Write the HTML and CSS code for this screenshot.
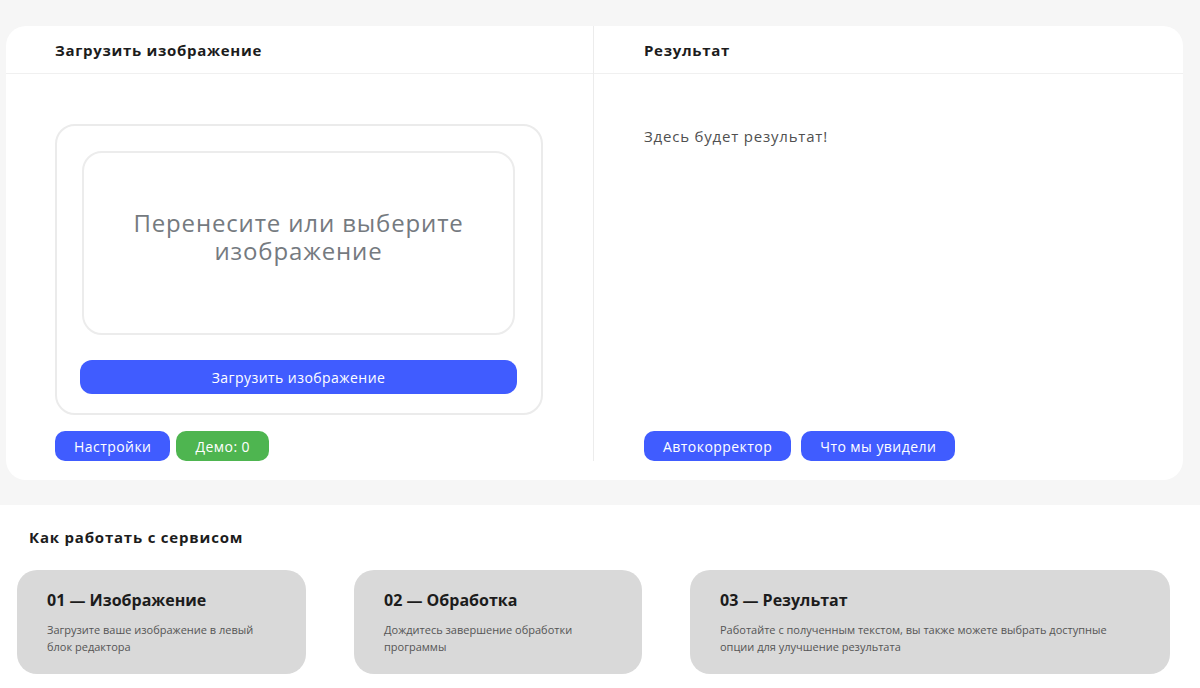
FILE: index.html
```html
<!DOCTYPE html>
<html lang="ru">

<head>
    <meta charset="UTF-8">
    <meta name="viewport" content="width=device-width, initial-scale=1.0">
    <title>Распознавание текста</title>
    <link rel="stylesheet" href="styles.css">
</head>

<body>
    <section class="top">
        <div class="editor">
            <!-- Левая колонка: загрузка -->
            <div class="col col-left">
                <div class="col-head">Загрузить изображение</div>
                <div class="col-body">
                    <div class="upload-box">
                        <div class="dropzone">Перенесите или выберите изображение</div>
                        <button class="btn btn-wide">Загрузить изображение</button>
                    </div>
                    <div class="btn-row">
                        <button class="btn">Настройки</button>
                        <button class="btn btn-green">Демо: 0</button>
                    </div>
                </div>
            </div>

            <!-- Правая колонка: результат -->
            <div class="col col-right">
                <div class="col-head">Результат</div>
                <div class="col-body result-body">
                    <p class="result-text">Здесь будет результат!</p>
                    <div class="btn-row">
                        <button class="btn">Автокорректор</button>
                        <button class="btn">Что мы увидели</button>
                    </div>
                </div>
            </div>
        </div>
    </section>

    <section class="how">
        <h2 class="how-title">Как работать с сервисом</h2>
        <div class="steps">
            <div class="step">
                <h3>01 — Изображение</h3>
                <p>Загрузите ваше изображение в левый блок редактора</p>
            </div>
            <div class="step">
                <h3>02 — Обработка</h3>
                <p>Дождитесь завершение обработки программы</p>
            </div>
            <div class="step">
                <h3>03 — Результат</h3>
                <p>Работайте с полученным текстом, вы также можете выбрать доступные опции для улучшение результата</p>
            </div>
        </div>
    </section>
</body>

</html>
```

FILE: styles.css
```css
* {
    box-sizing: border-box;
}

body {
    margin: 0;
    background-color: #fff;
    font-family: "Open Sans", "Noto Sans", sans-serif;
    color: #1c1c1c;
}

/* Верхний блок редактора */
.top {
    background-color: #f6f6f6;
    padding: 26px 17px 25px 6px;
}

.editor {
    display: grid;
    grid-template-columns: 588px 1fr;
    height: 454px;
    padding-bottom: 19px;
    background-color: #fff;
    border-radius: 20px;
}

.col {
    display: flex;
    flex-direction: column;
}

.col-left {
    border-right: 1px solid #ececec;
}

.col-head {
    height: 48px;
    padding-left: 49px;
    display: flex;
    align-items: center;
    border-bottom: 1px solid #f0f0f0;
    font-size: 15px;
    font-weight: 700;
    letter-spacing: 0.7px;
}

.col-right .col-head {
    padding-left: 50px;
}

.col-body {
    flex: 1;
    padding: 50px 0 0 49px;
}

.upload-box {
    width: 488px;
    height: 291px;
    padding: 25px 25px 19px 23px;
    border: 2px solid #ebebeb;
    border-radius: 20px;
}

.dropzone {
    height: 184px;
    margin: 0 1px 25px 2px;
    padding: 0 30px 12px;
    display: flex;
    align-items: center;
    justify-content: center;
    text-align: center;
    border: 2px solid #ececec;
    border-radius: 20px;
    font-size: 24px;
    line-height: 28px;
    letter-spacing: 0.85px;
    color: #757a7f;
}

/* Кнопки */
.btn {
    height: 30px;
    padding: 0 19px;
    border: none;
    border-radius: 10px;
    background-color: #405cff;
    color: #fff;
    font-family: inherit;
    font-size: 14px;
    letter-spacing: 0.45px;
    cursor: pointer;
}

.btn-wide {
    width: 437px;
    height: 34px;
    border-radius: 12px;
}

.btn-green {
    background-color: #4eb550;
}

.btn-row {
    display: flex;
    gap: 6px;
    margin-top: 16px;
}

.col-right .btn-row {
    gap: 10px;
}

.result-body {
    display: flex;
    flex-direction: column;
    justify-content: space-between;
    padding: 52px 0 0 50px;
}

.result-text {
    margin: 0;
    font-size: 15px;
    letter-spacing: 0.8px;
    color: #505050;
}

/* Нижний блок: как работать */
.how {
    padding: 22px 29px 14px 17px;
}

.how-title {
    margin: 0 0 23px 12px;
    font-size: 15px;
    line-height: 20px;
    font-weight: 700;
    letter-spacing: 0.8px;
}

.steps {
    display: grid;
    grid-template-columns: 289px 288px 480px;
    column-gap: 48px;
}

.step {
    height: 104px;
    padding: 20px 30px 0;
    background-color: #d9d9d9;
    border-radius: 20px;
}

.step h3 {
    margin: 0 0 11px;
    font-size: 16px;
    line-height: 20px;
    font-weight: 700;
}

.step p {
    margin: 0;
    font-size: 11px;
    line-height: 17px;
    color: #555;
}
```
